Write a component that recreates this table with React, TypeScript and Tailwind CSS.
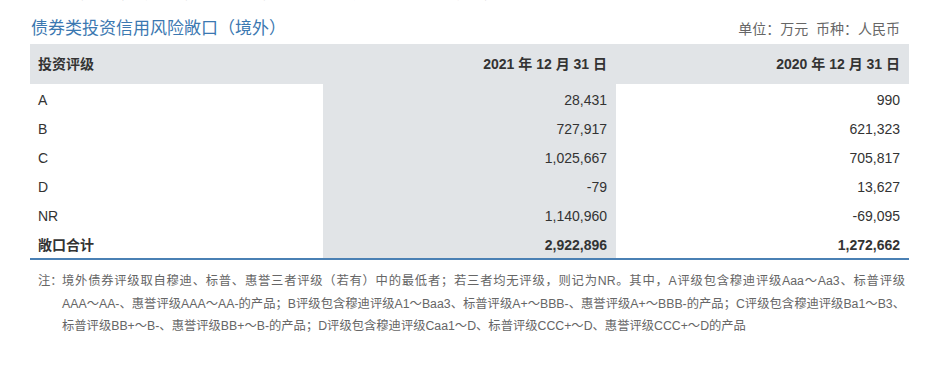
import React from "react";

const rows = [
  { k: "A", a: "28,431", b: "990" },
  { k: "B", a: "727,917", b: "621,323" },
  { k: "C", a: "1,025,667", b: "705,817" },
  { k: "D", a: "-79", b: "13,627" },
  { k: "NR", a: "1,140,960", b: "-69,095" },
];

export default function App() {
  return (
    <div
      className="w-[940px] h-[370px] bg-white overflow-hidden text-[#333]"
      style={{ fontFamily: '"Liberation Sans", "Noto Sans CJK SC", sans-serif' }}
    >
      <div className="h-[2px] overflow-hidden pl-[80px]">
        <div className="-mt-[13px] text-[13px] leading-[14px] text-[#999] whitespace-nowrap">
          ，若三者均无评级，则为未评级，投资评级信用风险敞口统计以公允价值计量的债券类资产
        </div>
      </div>
      <div className="mt-[16px] ml-[30px] w-[879px] flex items-end justify-between">
        <div className="text-[17px] leading-[21px] text-[#3b78b1] pl-[1px]">债券类投资信用风险敞口（境外）</div>
        <div className="text-[14px] leading-[20px] text-[#666] pr-[9px]">单位：万元&nbsp;&nbsp;币种：人民币</div>
      </div>
      <div className="mt-[5px] ml-[30px] w-[879px] border-b-2 border-[#4a80b4]">
        <div className="grid grid-cols-[293px_293px_293px] h-[40px] bg-[#e1e4e7] text-[14px] font-bold text-[#333] items-center">
          <div className="pl-[8px]">投资评级</div>
          <div className="text-right pr-[9px]">2021 年 12 月 31 日</div>
          <div className="text-right pr-[9px]">2020 年 12 月 31 日</div>
        </div>
        {rows.map((r) => (
          <div key={r.k} className="grid grid-cols-[293px_293px_293px] h-[29px] text-[14px]">
            <div className="pl-[8px] h-full flex items-center pt-[3px]">{r.k}</div>
            <div className="bg-[#e1e4e7] h-full flex items-center justify-end pr-[9px] pt-[3px]">{r.a}</div>
            <div className="h-full flex items-center justify-end pr-[9px] pt-[3px]">{r.b}</div>
          </div>
        ))}
        <div className="grid grid-cols-[293px_293px_293px] h-[29px] text-[14px] font-bold">
          <div className="pl-[8px] h-full flex items-center pt-[3px]">敞口合计</div>
          <div className="bg-[#e1e4e7] h-full flex items-center justify-end pr-[9px] pt-[3px]">2,922,896</div>
          <div className="h-full flex items-center justify-end pr-[9px] pt-[3px]">1,272,662</div>
        </div>
      </div>
      <div className="mt-[10px] ml-[38px] flex text-[12.3px] leading-[22.5px] text-[#666]">
        <div className="w-[24px] shrink-0">注：</div>
        <div className="w-[843px]">
          <div className="whitespace-nowrap text-justify [text-align-last:justify]">
            境外债券评级取自穆迪、标普、惠誉三者评级（若有）中的最低者；若三者均无评级，则记为NR。其中，A评级包含穆迪评级Aaa～Aa3、标普评级
          </div>
          <div className="whitespace-nowrap text-justify [text-align-last:justify]">
            AAA～AA-、惠誉评级AAA～AA-的产品；B评级包含穆迪评级A1～Baa3、标普评级A+～BBB-、惠誉评级A+～BBB-的产品；C评级包含穆迪评级Ba1～B3、
          </div>
          <div className="whitespace-nowrap">
            标普评级BB+～B-、惠誉评级BB+～B-的产品；D评级包含穆迪评级Caa1～D、标普评级CCC+～D、惠誉评级CCC+～D的产品
          </div>
        </div>
      </div>
    </div>
  );
}
